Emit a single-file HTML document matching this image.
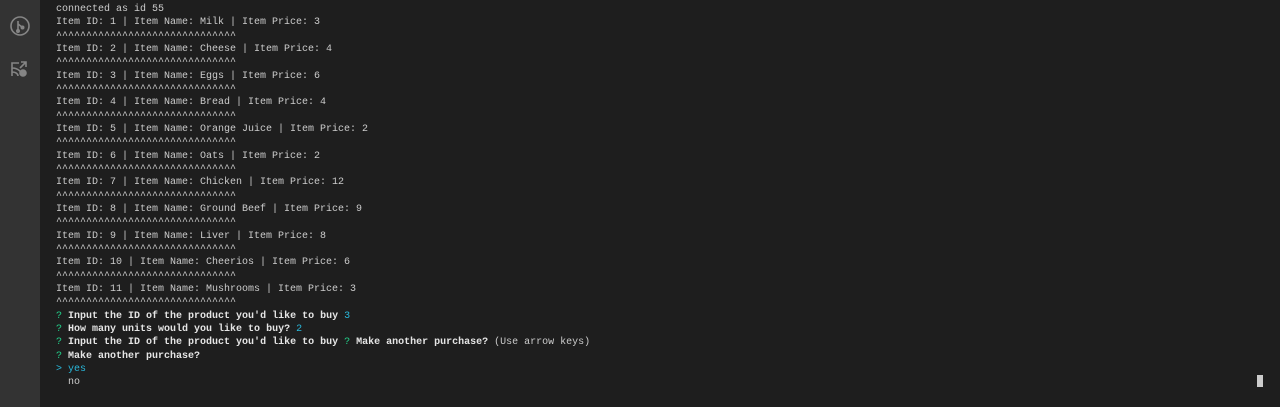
<!DOCTYPE html>
<html><head><style>
html,body{margin:0;padding:0;width:1280px;height:407px;background:#1e1e1e;overflow:hidden}
.side{position:absolute;left:0;top:0;width:40px;height:407px;background:#333333}
pre{position:absolute;left:56px;top:3px;margin:0;font-family:"Liberation Mono",monospace;font-size:10px;line-height:13.33px;color:#cccccc}
.g{color:#23d18b}.c{color:#29b8db}b{color:#e5e5e5}
.cur{position:absolute;left:1257px;top:375px;width:6px;height:12px;background:#cccccc}
</style></head><body>
<div class="side">
<svg style="position:absolute;left:9px;top:15px" width="22" height="22" viewBox="0 0 22 22" fill="none" stroke="#858585" stroke-width="1.6"><circle cx="11" cy="11" r="9"/><path d="M9 6v10M9 9l4 3"/><circle cx="9" cy="16" r="1.2" fill="#858585"/><circle cx="13.5" cy="12.5" r="1.2" fill="#858585"/></svg>
<svg style="position:absolute;left:10px;top:59px" width="20" height="20" viewBox="0 0 20 20" fill="none" stroke="#858585" stroke-width="1.6"><path d="M2 17V4h7M2 13c4 0 6 2 6 4M2 9c6 0 10 4 10 8M11 3l5 0 0 5M16 3l-6 6"/><circle cx="13" cy="14" r="3" fill="#858585"/></svg>
</div>
<pre>connected as id 55
Item ID: 1 | Item Name: Milk | Item Price: 3
^^^^^^^^^^^^^^^^^^^^^^^^^^^^^^
Item ID: 2 | Item Name: Cheese | Item Price: 4
^^^^^^^^^^^^^^^^^^^^^^^^^^^^^^
Item ID: 3 | Item Name: Eggs | Item Price: 6
^^^^^^^^^^^^^^^^^^^^^^^^^^^^^^
Item ID: 4 | Item Name: Bread | Item Price: 4
^^^^^^^^^^^^^^^^^^^^^^^^^^^^^^
Item ID: 5 | Item Name: Orange Juice | Item Price: 2
^^^^^^^^^^^^^^^^^^^^^^^^^^^^^^
Item ID: 6 | Item Name: Oats | Item Price: 2
^^^^^^^^^^^^^^^^^^^^^^^^^^^^^^
Item ID: 7 | Item Name: Chicken | Item Price: 12
^^^^^^^^^^^^^^^^^^^^^^^^^^^^^^
Item ID: 8 | Item Name: Ground Beef | Item Price: 9
^^^^^^^^^^^^^^^^^^^^^^^^^^^^^^
Item ID: 9 | Item Name: Liver | Item Price: 8
^^^^^^^^^^^^^^^^^^^^^^^^^^^^^^
Item ID: 10 | Item Name: Cheerios | Item Price: 6
^^^^^^^^^^^^^^^^^^^^^^^^^^^^^^
Item ID: 11 | Item Name: Mushrooms | Item Price: 3
^^^^^^^^^^^^^^^^^^^^^^^^^^^^^^
<span class="g">?</span> <b>Input the ID of the product you'd like to buy</b> <span class="c">3</span>
<span class="g">?</span> <b>How many units would you like to buy?</b> <span class="c">2</span>
<span class="g">?</span> <b>Input the ID of the product you'd like to buy</b> <span class="g">?</span> <b>Make another purchase?</b> (Use arrow keys)
<span class="g">?</span> <b>Make another purchase?</b>
<span class="c">&gt; yes</span>
  no</pre>
<div class="cur"></div>
</body></html>
